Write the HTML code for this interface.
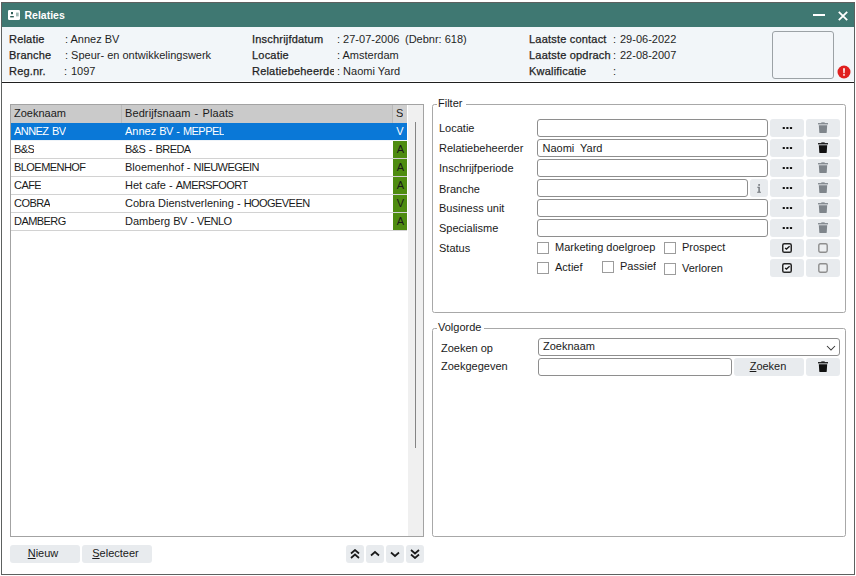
<!DOCTYPE html>
<html><head><meta charset="utf-8">
<style>
*{box-sizing:border-box;margin:0;padding:0}
html,body{width:856px;height:576px;background:#fff;overflow:hidden;font-family:"Liberation Sans",sans-serif;font-size:11px;color:#1a1a1a}
.a{position:absolute}
.t{position:absolute;white-space:nowrap;line-height:13px}
#win{position:absolute;left:1px;top:2px;width:854px;height:573px;border:1px solid #5d6160;background:#fff}
#title{position:absolute;left:2px;top:3px;width:852px;height:24px;background:#3f7872}
#hdr{position:absolute;left:2px;top:27px;width:852px;height:54px;background:#f2f6f9}
#hsep{position:absolute;left:2px;top:82px;width:852px;height:1px;background:#1f1f1f}
.hb{font-size:11px;color:#1f1f1f;overflow:hidden;-webkit-text-stroke:0.25px #1f1f1f;letter-spacing:0.2px}
.hv{color:#1f1f1f}
#list{position:absolute;left:10px;top:104px;width:414px;height:433px;border:1px solid #a3a3a3;background:#fff}
.row{position:absolute;left:0;width:396px;height:18px;border-bottom:1px solid #d2d2d2}
.c{position:absolute;top:0;height:17px;line-height:17px;white-space:nowrap;overflow:hidden}
.sel{background:#0a78d7;color:#fff;border-bottom-color:#eef3f8}
.g{left:382px;width:14px;background:#4e8c10;text-align:center;color:#1a1a1a;padding-left:1px}
.gb{position:absolute;border:1px solid #a8a8a8;border-radius:2.5px}
.leg{position:absolute;background:#fff;padding:0 2px 0 1px;line-height:13px;white-space:nowrap}
.inp{position:absolute;height:18px;border:1px solid #8e8e8e;border-radius:3px;background:#fff}
.btn{position:absolute;height:18px;background:#e8ebee;border-radius:3px}
.lbl{position:absolute;left:439px;line-height:18px;height:18px;white-space:nowrap}
.cb{position:absolute;width:12px;height:12px;border:1px solid #9c9c9c;background:#fff}
.dots{position:absolute;left:12.5px;top:7.5px;width:10px;height:2px}
.dots i{position:absolute;top:0;width:2.3px;height:2.3px;background:#111;border-radius:0.8px}
svg{position:absolute;display:block}
.u{letter-spacing:-0.55px;word-spacing:1px}
</style></head><body>
<div id="win"></div>
<div id="title">
  <svg style="left:6px;top:7px" width="12" height="10" viewBox="0 0 12 10">
    <rect x="0" y="0" width="12" height="10" rx="1.2" fill="#fff"/>
    <rect x="3" y="2" width="2" height="2.2" fill="#2f5f58"/>
    <rect x="2.2" y="6" width="3.6" height="1.4" fill="#2f5f58"/>
    <rect x="8" y="2.6" width="2.7" height="3.8" fill="#9fb8b4"/>
  </svg>
  <div class="t" style="left:22.5px;top:6px;font-weight:bold;font-size:10.5px;color:#fff">Relaties</div>
  <div class="a" style="left:811px;top:11px;width:12px;height:2px;background:#fff"></div>
  <svg style="left:835.5px;top:7.5px" width="10" height="10" viewBox="0 0 10 10"><path d="M0.8 0.8L9.2 9.2M9.2 0.8L0.8 9.2" stroke="#fff" stroke-width="1.8"/></svg>
</div>
<div id="hdr"></div>
<div id="hsep"></div>
<!-- header info -->
<div class="t hb" style="left:9px;top:33px;width:55px">Relatie</div>
<div class="t hv" style="left:65px;top:33px">: Annez BV</div>
<div class="t hb" style="left:9px;top:49px;width:55px">Branche</div>
<div class="t hv" style="left:65px;top:49px">: Speur- en ontwikkelingswerk</div>
<div class="t hb" style="left:9px;top:65px;width:55px">Reg.nr.</div>
<div class="t hv" style="left:64px;top:65px">:</div><div class="t hv" style="left:71px;top:65px">1097</div>

<div class="t hb" style="left:252px;top:33px;width:82px">Inschrijfdatum</div>
<div class="t hv" style="left:337px;top:33px">: 27-07-2006</div>
<div class="t hv" style="left:405px;top:33px">(Debnr: 618)</div>
<div class="t hb" style="left:252px;top:49px;width:82px">Locatie</div>
<div class="t hv" style="left:337px;top:49px">: Amsterdam</div>
<div class="t hb" style="left:252px;top:65px;width:82px">Relatiebeheerder</div>
<div class="t hv" style="left:337px;top:65px">: Naomi Yard</div>

<div class="t hb" style="left:529px;top:33px;width:83px">Laatste contact</div>
<div class="t hv" style="left:613px;top:33px">:</div><div class="t hv" style="left:620px;top:33px">29-06-2022</div>
<div class="t hb" style="left:529px;top:49px;width:82px">Laatste opdracht</div>
<div class="t hv" style="left:613px;top:49px">:</div><div class="t hv" style="left:620px;top:49px">22-08-2007</div>
<div class="t hb" style="left:529px;top:65px;width:83px">Kwalificatie</div>
<div class="t hv" style="left:613px;top:65px">:</div>

<div class="a" style="left:772px;top:31px;width:62px;height:48px;border:1px solid #9ca2a6;border-radius:3px;background:#f3f6f9"></div>
<svg style="left:837px;top:65px" width="14" height="14" viewBox="0 0 14 14"><circle cx="7" cy="7" r="6.5" fill="#e0201f"/><path d="M6.1 3.3H7.9L7.6 8.2H6.4Z" fill="#fff"/><rect x="6.2" y="9.1" width="1.6" height="1.6" fill="#fff"/></svg>

<!-- list -->
<div id="list">
  <div class="a" style="left:0;top:0;width:396px;height:18px;background:#cacaca"></div>
  <div class="a" style="left:110px;top:0;width:1px;height:18px;background:#b9b9b9"></div>
  <div class="a" style="left:381px;top:0;width:1px;height:18px;background:#b9b9b9"></div>
  <div class="a" style="left:382px;top:0;width:14px;height:18px;background:#d0d0d0"></div>
  <div class="c" style="left:3px;top:-1px;line-height:18px;height:18px">Zoeknaam</div>
  <div class="c" style="left:114px;top:-1px;line-height:18px;height:18px;letter-spacing:0.1px;word-spacing:1px">Bedrijfsnaam - Plaats</div>
  <div class="c" style="left:385px;top:-1px;line-height:18px;height:18px">S</div>

  <div class="row sel" style="top:18px"><div class="c u" style="left:3px">ANNEZ BV</div><div class="c" style="left:114px">Annez <span class="u">BV - MEPPEL</span></div><div class="c" style="left:382px;width:14px;text-align:center">V</div></div>
  <div class="row" style="top:36px"><div class="c u" style="left:3px">B&amp;S</div><div class="c u" style="left:114px">B&amp;S - BREDA</div><div class="c g">A</div></div>
  <div class="row" style="top:54px"><div class="c u" style="left:3px">BLOEMENHOF</div><div class="c" style="left:114px">Bloemenhof - <span class="u">NIEUWEGEIN</span></div><div class="c g">A</div></div>
  <div class="row" style="top:72px"><div class="c u" style="left:3px">CAFE</div><div class="c" style="left:114px">Het cafe - <span class="u">AMERSFOORT</span></div><div class="c g">A</div></div>
  <div class="row" style="top:90px"><div class="c u" style="left:3px">COBRA</div><div class="c" style="left:114px">Cobra Dienstverlening - <span class="u">HOOGEVEEN</span></div><div class="c g">V</div></div>
  <div class="row" style="top:108px"><div class="c u" style="left:3px">DAMBERG</div><div class="c" style="left:114px">Damberg <span class="u">BV - VENLO</span></div><div class="c g">A</div></div>

  <div class="a" style="left:397px;top:0;width:15px;height:431px;background:#f0f0f0"></div>
  <div class="a" style="left:404px;top:17px;width:1px;height:326px;background:#858585"></div>
</div>

<!-- bottom buttons -->
<div class="btn" style="left:10px;top:545px;width:70px;text-align:center;line-height:17px;padding-right:4px"><u>N</u>ieuw</div>
<div class="btn" style="left:82px;top:545px;width:70px;text-align:center;line-height:17px;padding-right:3px"><u>S</u>electeer</div>
<div class="btn" style="left:346px;top:545px;width:18px"><svg style="left:4px;top:4px" width="10" height="10" viewBox="0 0 10 10"><path d="M1 4.5L5 1L9 4.5M1 9L5 5.5L9 9" fill="none" stroke="#1a1a1a" stroke-width="1.7"/></svg></div>
<div class="btn" style="left:366px;top:545px;width:18px"><svg style="left:4px;top:4px" width="10" height="10" viewBox="0 0 10 10"><path d="M1 6.5L5 3L9 6.5" fill="none" stroke="#1a1a1a" stroke-width="1.7"/></svg></div>
<div class="btn" style="left:386px;top:545px;width:18px"><svg style="left:4px;top:4px" width="10" height="10" viewBox="0 0 10 10"><path d="M1 3.5L5 7L9 3.5" fill="none" stroke="#1a1a1a" stroke-width="1.7"/></svg></div>
<div class="btn" style="left:406px;top:545px;width:18px"><svg style="left:4px;top:4px" width="10" height="10" viewBox="0 0 10 10"><path d="M1 1L5 4.5L9 1M1 5.5L5 9L9 5.5" fill="none" stroke="#1a1a1a" stroke-width="1.7"/></svg></div>

<!-- filter -->
<div class="gb" style="left:432px;top:104px;width:414px;height:209px"></div>
<div class="leg" style="left:437px;top:97px;padding-right:4px">Filter</div>
<div class="lbl" style="top:119px">Locatie</div>
<div class="lbl" style="top:139px">Relatiebeheerder</div>
<div class="lbl" style="top:159px">Inschrijfperiode</div>
<div class="lbl" style="top:179.5px">Branche</div>
<div class="lbl" style="top:199px">Business unit</div>
<div class="lbl" style="top:219px">Specialisme</div>
<div class="lbl" style="top:239px">Status</div>

<div class="inp" style="left:537px;top:119px;width:231px"></div>
<div class="inp" style="left:537px;top:139px;width:231px"><div class="t" style="left:4.5px;top:2px">Naomi</div><div class="t" style="left:42px;top:2px">Yard</div></div>
<div class="inp" style="left:537px;top:159px;width:231px"></div>
<div class="inp" style="left:537px;top:179px;width:211px"></div>
<div class="btn" style="left:750px;top:179px;width:18px"><svg style="left:6px;top:4px" width="6" height="10" viewBox="0 0 6 10"><circle cx="3.1" cy="1.9" r="0.95" fill="#6d7277"/><path d="M1.3 3.8H3.8V8.7H4.9V9.7H1.2V8.7H2.4V4.7H1.3Z" fill="#6d7277"/></svg></div>
<div class="inp" style="left:537px;top:199px;width:231px"></div>
<div class="inp" style="left:537px;top:219px;width:231px"></div>
<div class="btn" style="left:770px;top:119px;width:34px"><svg style="left:12px;top:7px" width="11" height="4" viewBox="0 0 11 4"><rect x="0.7" y="0.9" width="2.2" height="2.2" rx="0.6" fill="#111"/><rect x="4.3" y="0.9" width="2.2" height="2.2" rx="0.6" fill="#111"/><rect x="7.9" y="0.9" width="2.2" height="2.2" rx="0.6" fill="#111"/></svg></div>
<div class="btn" style="left:806px;top:119px;width:34px"><svg style="left:12px;top:3px" width="10" height="12" viewBox="0 0 10 12"><rect x="3.3" y="0.4" width="3.4" height="1" fill="#7f858b"/><rect x="0" y="1.1" width="10" height="1.3" fill="#7f858b"/><path d="M0.8 3.2H9.2L8.7 10.4Q8.6 11.1 7.9 11.1H2.1Q1.4 11.1 1.3 10.4Z" fill="#7f858b"/></svg></div>
<div class="btn" style="left:770px;top:139px;width:34px"><svg style="left:12px;top:7px" width="11" height="4" viewBox="0 0 11 4"><rect x="0.7" y="0.9" width="2.2" height="2.2" rx="0.6" fill="#111"/><rect x="4.3" y="0.9" width="2.2" height="2.2" rx="0.6" fill="#111"/><rect x="7.9" y="0.9" width="2.2" height="2.2" rx="0.6" fill="#111"/></svg></div>
<div class="btn" style="left:806px;top:139px;width:34px"><svg style="left:12px;top:3px" width="10" height="12" viewBox="0 0 10 12"><rect x="3.3" y="0.4" width="3.4" height="1" fill="#111"/><rect x="0" y="1.1" width="10" height="1.3" fill="#111"/><path d="M0.8 3.2H9.2L8.7 10.4Q8.6 11.1 7.9 11.1H2.1Q1.4 11.1 1.3 10.4Z" fill="#111"/></svg></div>
<div class="btn" style="left:770px;top:159px;width:34px"><svg style="left:12px;top:7px" width="11" height="4" viewBox="0 0 11 4"><rect x="0.7" y="0.9" width="2.2" height="2.2" rx="0.6" fill="#111"/><rect x="4.3" y="0.9" width="2.2" height="2.2" rx="0.6" fill="#111"/><rect x="7.9" y="0.9" width="2.2" height="2.2" rx="0.6" fill="#111"/></svg></div>
<div class="btn" style="left:806px;top:159px;width:34px"><svg style="left:12px;top:3px" width="10" height="12" viewBox="0 0 10 12"><rect x="3.3" y="0.4" width="3.4" height="1" fill="#7f858b"/><rect x="0" y="1.1" width="10" height="1.3" fill="#7f858b"/><path d="M0.8 3.2H9.2L8.7 10.4Q8.6 11.1 7.9 11.1H2.1Q1.4 11.1 1.3 10.4Z" fill="#7f858b"/></svg></div>
<div class="btn" style="left:770px;top:179px;width:34px"><svg style="left:12px;top:7px" width="11" height="4" viewBox="0 0 11 4"><rect x="0.7" y="0.9" width="2.2" height="2.2" rx="0.6" fill="#111"/><rect x="4.3" y="0.9" width="2.2" height="2.2" rx="0.6" fill="#111"/><rect x="7.9" y="0.9" width="2.2" height="2.2" rx="0.6" fill="#111"/></svg></div>
<div class="btn" style="left:806px;top:179px;width:34px"><svg style="left:12px;top:3px" width="10" height="12" viewBox="0 0 10 12"><rect x="3.3" y="0.4" width="3.4" height="1" fill="#7f858b"/><rect x="0" y="1.1" width="10" height="1.3" fill="#7f858b"/><path d="M0.8 3.2H9.2L8.7 10.4Q8.6 11.1 7.9 11.1H2.1Q1.4 11.1 1.3 10.4Z" fill="#7f858b"/></svg></div>
<div class="btn" style="left:770px;top:199px;width:34px"><svg style="left:12px;top:7px" width="11" height="4" viewBox="0 0 11 4"><rect x="0.7" y="0.9" width="2.2" height="2.2" rx="0.6" fill="#111"/><rect x="4.3" y="0.9" width="2.2" height="2.2" rx="0.6" fill="#111"/><rect x="7.9" y="0.9" width="2.2" height="2.2" rx="0.6" fill="#111"/></svg></div>
<div class="btn" style="left:806px;top:199px;width:34px"><svg style="left:12px;top:3px" width="10" height="12" viewBox="0 0 10 12"><rect x="3.3" y="0.4" width="3.4" height="1" fill="#7f858b"/><rect x="0" y="1.1" width="10" height="1.3" fill="#7f858b"/><path d="M0.8 3.2H9.2L8.7 10.4Q8.6 11.1 7.9 11.1H2.1Q1.4 11.1 1.3 10.4Z" fill="#7f858b"/></svg></div>
<div class="btn" style="left:770px;top:219px;width:34px"><svg style="left:12px;top:7px" width="11" height="4" viewBox="0 0 11 4"><rect x="0.7" y="0.9" width="2.2" height="2.2" rx="0.6" fill="#111"/><rect x="4.3" y="0.9" width="2.2" height="2.2" rx="0.6" fill="#111"/><rect x="7.9" y="0.9" width="2.2" height="2.2" rx="0.6" fill="#111"/></svg></div>
<div class="btn" style="left:806px;top:219px;width:34px"><svg style="left:12px;top:3px" width="10" height="12" viewBox="0 0 10 12"><rect x="3.3" y="0.4" width="3.4" height="1" fill="#7f858b"/><rect x="0" y="1.1" width="10" height="1.3" fill="#7f858b"/><path d="M0.8 3.2H9.2L8.7 10.4Q8.6 11.1 7.9 11.1H2.1Q1.4 11.1 1.3 10.4Z" fill="#7f858b"/></svg></div>
<div class="btn" style="left:770px;top:239px;width:34px"><svg style="left:12px;top:4px" width="10" height="10" viewBox="0 0 10 10"><rect x="0.75" y="0.75" width="8.5" height="8.5" rx="1.6" fill="#f2f4f6" stroke="#262626" stroke-width="1.5"/><path d="M3.1 4.9L4.5 6.1L7.6 3.3" fill="none" stroke="#1a1a1a" stroke-width="1.35"/></svg></div>
<div class="btn" style="left:806px;top:239px;width:34px"><svg style="left:12px;top:4px" width="10" height="10" viewBox="0 0 10 10"><rect x="0.8" y="0.8" width="8.4" height="8.4" rx="1.6" fill="#eceef0" stroke="#8e8e8e" stroke-width="1.4"/></svg></div>
<div class="btn" style="left:770px;top:259px;width:34px"><svg style="left:12px;top:4px" width="10" height="10" viewBox="0 0 10 10"><rect x="0.75" y="0.75" width="8.5" height="8.5" rx="1.6" fill="#f2f4f6" stroke="#262626" stroke-width="1.5"/><path d="M3.1 4.9L4.5 6.1L7.6 3.3" fill="none" stroke="#1a1a1a" stroke-width="1.35"/></svg></div>
<div class="btn" style="left:806px;top:259px;width:34px"><svg style="left:12px;top:4px" width="10" height="10" viewBox="0 0 10 10"><rect x="0.8" y="0.8" width="8.4" height="8.4" rx="1.6" fill="#eceef0" stroke="#8e8e8e" stroke-width="1.4"/></svg></div>
<div class="cb" style="left:537px;top:242px"></div>
<div class="t" style="left:555px;top:241px;width:102px;overflow:hidden;">Marketing doelgroep</div>
<div class="cb" style="left:664px;top:242px"></div>
<div class="t" style="left:682px;top:241px;">Prospect</div>
<div class="cb" style="left:537px;top:262px"></div>
<div class="t" style="left:555px;top:261px;">Actief</div>
<div class="cb" style="left:602px;top:261px"></div>
<div class="t" style="left:620px;top:260px;width:36px;overflow:hidden;">Passief</div>
<div class="cb" style="left:664px;top:263px"></div>
<div class="t" style="left:682px;top:262px;">Verloren</div>
<div class="gb" style="left:432px;top:328px;width:414px;height:209px"></div>
<div class="leg" style="left:437px;top:321px;padding-right:3px">Volgorde</div>
<div class="lbl" style="left:441px;top:339px">Zoeken op</div>
<div class="lbl" style="left:441px;top:357px">Zoekgegeven</div>
<div class="inp" style="left:538px;top:338px;width:302px"><div class="t" style="left:4px;top:1px">Zoeknaam</div><svg style="left:287px;top:5.5px" width="10" height="6" viewBox="0 0 10 6"><path d="M1 1L5 5L9 1" fill="none" stroke="#333" stroke-width="1.05"/></svg></div>
<div class="inp" style="left:538px;top:358px;width:194px"></div>
<div class="btn" style="left:734px;top:358px;width:70px;text-align:center;line-height:16px;padding-right:2px"><u>Z</u>oeken</div>
<div class="btn" style="left:806px;top:358px;width:34px"><svg style="left:12px;top:3px" width="10" height="12" viewBox="0 0 10 12"><rect x="3.3" y="0.4" width="3.4" height="1" fill="#111"/><rect x="0" y="1.1" width="10" height="1.3" fill="#111"/><path d="M0.8 3.2H9.2L8.7 10.4Q8.6 11.1 7.9 11.1H2.1Q1.4 11.1 1.3 10.4Z" fill="#111"/></svg></div>
</body></html>
